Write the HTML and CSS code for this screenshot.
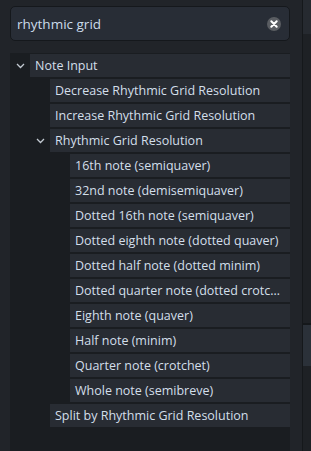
FILE: index.html
```html
<!DOCTYPE html>
<html lang="en">
<head>
  <meta charset="UTF-8">
  <title>Shortcuts</title>
  <link rel="stylesheet" href="styles.css">
</head>
<body>
  <div class="panel">
    <div class="main">
      <div class="search">
        <span class="search-text">rhythmic grid</span>
        <span class="clear">
          <svg width="14" height="14" viewBox="0 0 14 14">
            <circle cx="7" cy="7" r="7" fill="#5a5d62"/>
            <path d="M4.3 4.3 L9.7 9.7 M9.7 4.3 L4.3 9.7" stroke="#fff" stroke-width="2" stroke-linecap="round"/>
          </svg>
        </span>
      </div>

      <div class="tree">
        <div class="node lvl0">
          <span class="chev"><svg width="9" height="6" viewBox="0 0 9 6"><path d="M1 1 L4.5 4.5 L8 1" fill="none" stroke="#c3cad2" stroke-width="1.3"/></svg></span>
          <div class="row">Note Input</div>
        </div>
        <div class="node lvl1"><div class="row">Decrease Rhythmic Grid Resolution</div></div>
        <div class="node lvl1"><div class="row">Increase Rhythmic Grid Resolution</div></div>
        <div class="node lvl1 open">
          <span class="chev"><svg width="9" height="6" viewBox="0 0 9 6"><path d="M1 1 L4.5 4.5 L8 1" fill="none" stroke="#c3cad2" stroke-width="1.3"/></svg></span>
          <div class="row">Rhythmic Grid Resolution</div>
        </div>
        <div class="node lvl2"><div class="row">16th note (semiquaver)</div></div>
        <div class="node lvl2"><div class="row">32nd note (demisemiquaver)</div></div>
        <div class="node lvl2"><div class="row">Dotted 16th note (semiquaver)</div></div>
        <div class="node lvl2"><div class="row">Dotted eighth note (dotted quaver)</div></div>
        <div class="node lvl2"><div class="row">Dotted half note (dotted minim)</div></div>
        <div class="node lvl2"><div class="row">Dotted quarter note (dotted crotchet)</div></div>
        <div class="node lvl2"><div class="row">Eighth note (quaver)</div></div>
        <div class="node lvl2"><div class="row">Half note (minim)</div></div>
        <div class="node lvl2"><div class="row">Quarter note (crotchet)</div></div>
        <div class="node lvl2"><div class="row">Whole note (semibreve)</div></div>
        <div class="node lvl1"><div class="row">Split by Rhythmic Grid Resolution</div></div>
      </div>
    </div>

    <div class="side">
      <div class="side-top"></div>
      <div class="side-thumb"></div>
    </div>
  </div>
</body>
</html>
```

FILE: styles.css
```css
html, body {
  margin: 0;
  height: 100%;
  background: #212429;
  overflow: hidden;
}
body {
  font-family: "Open Sans", "Noto Sans", sans-serif;
  font-size: 12.5px;
  color: #d3dfea;
}
.panel {
  display: flex;
  height: 100%;
}
.main {
  width: 280px;
  padding: 6px 12px 0 10px;
  display: flex;
  flex-direction: column;
}
.search {
  height: 33px;
  border: 1px solid #15181c;
  border-radius: 5px;
  background: #282d36;
  display: flex;
  align-items: center;
  justify-content: space-between;
  padding: 0 8px 0 6px;
  width: 264px;
}
.search-text {
  font-size: 13.5px;
  color: #cbdbea;
}
.clear {
  display: flex;
}
.tree {
  margin-top: 12px;
  flex: 1;
  background: #1a1d21;
  padding-top: 1px;
}
.node {
  display: flex;
  align-items: center;
  margin-bottom: 2px;
}
.lvl0 { padding-left: 20px; }
.lvl1 { padding-left: 40px; }
.lvl2 { padding-left: 60px; }
.chev {
  width: 20px;
  margin-left: -20px;
  display: flex;
  justify-content: center;
}
.row {
  flex: 1;
  min-width: 0;
  height: 23px;
  line-height: 23px;
  background: #282c33;
  padding: 0 6px 0 5px;
  white-space: nowrap;
  overflow: hidden;
  text-overflow: ellipsis;
}
.side {
  width: 9px;
  border-left: 1px solid #15181b;
  background: #1e2125;
}
.side-top {
  height: 34px;
  background: #262a30;
}
.side-thumb {
  margin-top: 289px;
  height: 41px;
  background: #2b3139;
  border-top: 2px solid #15181b;
}
```
